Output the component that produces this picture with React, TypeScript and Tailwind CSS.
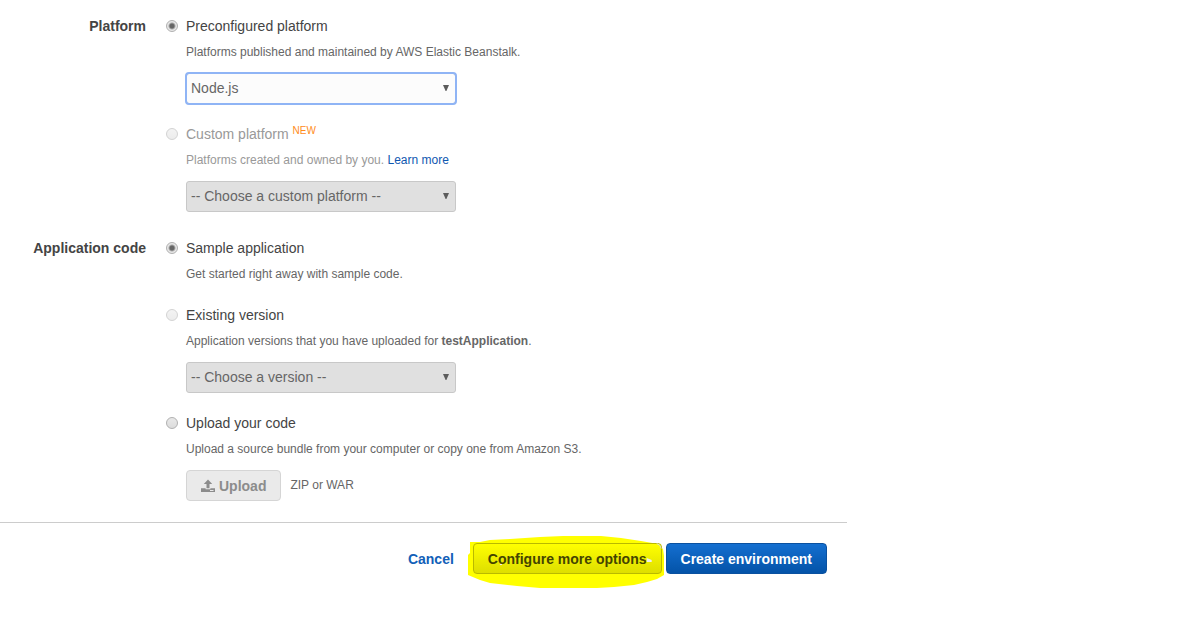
import { useState } from "react";
import type { ReactNode } from "react";

const radioClass =
  "mt-1 size-3 shrink-0 appearance-none rounded-full border border-[#b0b0b0] bg-linear-to-b from-[#e8e8e8] to-[#dcdcdc] checked:bg-[radial-gradient(circle,#666_0_2px,#e8e8e8_4px)] disabled:border-[#d3d3d3] disabled:from-[#f3f3f3] disabled:to-[#ececec]";

const selectClass =
  "h-[31px] w-full appearance-none rounded-[3px] border border-[#c8c8c8] bg-[#fcfcfc] pr-6 pb-0.5 pl-1 text-sm text-[#666] outline-[#8fb4f5] disabled:bg-[#e0e0e0] disabled:opacity-100";

function Section({ title, children }: { title: string; children: ReactNode }) {
  return (
    <fieldset className="flex gap-5">
      <legend className="float-left w-[146px] shrink-0 text-right text-sm leading-5 font-bold text-[#444]">
        {title}
      </legend>
      <div className="flex min-w-0 flex-1 flex-col gap-5">{children}</div>
    </fieldset>
  );
}

interface OptionProps {
  id: string;
  group: string;
  title: ReactNode;
  description: ReactNode;
  checked?: boolean;
  disabled?: boolean;
  muted?: boolean;
  onSelect?: () => void;
  children?: ReactNode;
}

function Option({ id, group, title, description, checked = false, disabled, muted, onSelect, children }: OptionProps) {
  return (
    <div className="flex items-start gap-2">
      <input
        type="radio"
        id={id}
        name={group}
        checked={checked}
        disabled={disabled}
        onChange={() => onSelect?.()}
        className={radioClass}
      />
      <div className="min-w-0 flex-1">
        <label htmlFor={id} className={muted ? "block text-sm leading-5 text-[#999]" : "block text-sm leading-5 text-[#444]"}>
          {title}
        </label>
        <p className={muted ? "mt-[6px] text-xs leading-[21px] text-[#999]" : "mt-[6px] text-xs leading-[21px] text-[#666]"}>
          {description}
        </p>
        {children && <div className="mt-[10px]">{children}</div>}
      </div>
    </div>
  );
}

function Dropdown({ label, options, disabled, focused }: { label: string; options: string[]; disabled?: boolean; focused?: boolean }) {
  return (
    <div className="relative w-full max-w-[270px]">
      <select
        aria-label={label}
        disabled={disabled}
        className={focused ? `${selectClass} outline-2 -outline-offset-1` : selectClass}
      >
        {options.map((o) => (
          <option key={o}>{o}</option>
        ))}
      </select>
      <svg viewBox="0 0 6 6" className="pointer-events-none absolute top-3 right-[7px] size-[6px] fill-[#5c5c5c]" aria-hidden="true">
        <path d="M0 0h6L3.400 6H2.600z" />
      </svg>
    </div>
  );
}

export default function App() {
  const [code, setCode] = useState("sample");
  return (
    <form className="w-full max-w-[847px] pt-4 pb-12 font-['Liberation_Sans',Arial,sans-serif]" onSubmit={(e) => e.preventDefault()}>
      <div className="flex flex-col gap-[26px]">
        <Section title="Platform">
          <Option
            id="preconfigured"
            group="platform"
            title="Preconfigured platform"
            description="Platforms published and maintained by AWS Elastic Beanstalk."
            checked
          >
            <Dropdown label="Preconfigured platform" options={["Node.js"]} focused />
          </Option>
          <Option
            id="custom"
            group="platform"
            disabled
            muted
            title={
              <>
                Custom platform <sup className="text-[10px] text-[#ff8c1a]">NEW</sup>
              </>
            }
            description={
              <>
                Platforms created and owned by you.{" "}
                <a href="#learn-more" className="text-[#0f57b0]">
                  Learn more
                </a>
              </>
            }
          >
            <Dropdown label="Custom platform" options={["-- Choose a custom platform --"]} disabled />
          </Option>
        </Section>

        <Section title="Application code">
          <Option
            id="sample"
            group="code"
            title="Sample application"
            description="Get started right away with sample code."
            checked={code === "sample"}
            onSelect={() => setCode("sample")}
          />
          <Option
            id="existing"
            group="code"
            disabled
            title="Existing version"
            description={
              <>
                Application versions that you have uploaded for <b>testApplication</b>.
              </>
            }
          >
            <Dropdown label="Existing version" options={["-- Choose a version --"]} disabled />
          </Option>
          <Option
            id="upload"
            group="code"
            title="Upload your code"
            description="Upload a source bundle from your computer or copy one from Amazon S3."
            checked={code === "upload"}
            onSelect={() => setCode("upload")}
          >
            <div className="flex items-start gap-[9px]">
              <button
                type="button"
                disabled
                className="flex h-[31px] items-center gap-1 rounded-[4px] border border-[#d5d5d5] bg-[#eaeaea] px-[14px] text-sm font-bold text-[#8c8c8c]"
              >
                <svg viewBox="0 0 14 14" className="size-[14px] fill-current" aria-hidden="true">
                  <path d="M7 .500 11.200 5H8.500v4.200h-3V5H2.800z" />
                  <path fillRule="evenodd" d="M0 9.200h4.600v1h4.800v-1H14V13H0zM9 11v.900h3.500V11z" />
                </svg>
                Upload
              </button>
              <span className="text-xs leading-[30px] text-[#666]">ZIP or WAR</span>
            </div>
          </Option>
        </Section>
      </div>

      <div className="mt-[21px] flex items-center justify-end border-t border-[#ccc] pt-5 pr-5 text-sm font-bold">
        <a href="#cancel" className="mr-[19px] text-[#1260b8]">
          Cancel
        </a>
        <div className="relative mr-1">
          <svg viewBox="0 0 196 52" className="absolute -top-[7px] -left-[5px] h-[52px] w-[196px] max-w-none" aria-hidden="true">
            <path
              fill="#ff0"
              d="M2 6h10l10-2 20-1 30-2 23-1h38l20 2 20 3 17 3 5 5 1 7v19l-7 4-10 3-13 3-20 2-17 1H72l-23-2-27-3-10-3-12-5V19l2-2z"
            />
          </svg>
          <button
            type="button"
            className="relative h-[31px] rounded-[4px] border border-[#b9b900] bg-linear-to-b from-[#ff0] to-[#dede00] px-[14px] text-[#444400]"
          >
            Configure more options
          </button>
          <svg viewBox="0 0 189 31" className="pointer-events-none absolute inset-0 size-full" aria-hidden="true">
            <path fill="#eee" d="M174 15l5 2v2h-5z" />
            <path fill="none" stroke="#d8d8d8" d="M184 .500q4 1 4.500 5" />
            <path fill="#eee" d="M27 21h2v1h-2z" />
          </svg>
        </div>
        <button
          type="button"
          className="h-[31px] rounded-[4px] border border-[#0a51a0] bg-linear-to-b from-[#146fd0] to-[#0453a8] px-[14px] text-white"
        >
          Create environment
        </button>
      </div>
    </form>
  );
}
